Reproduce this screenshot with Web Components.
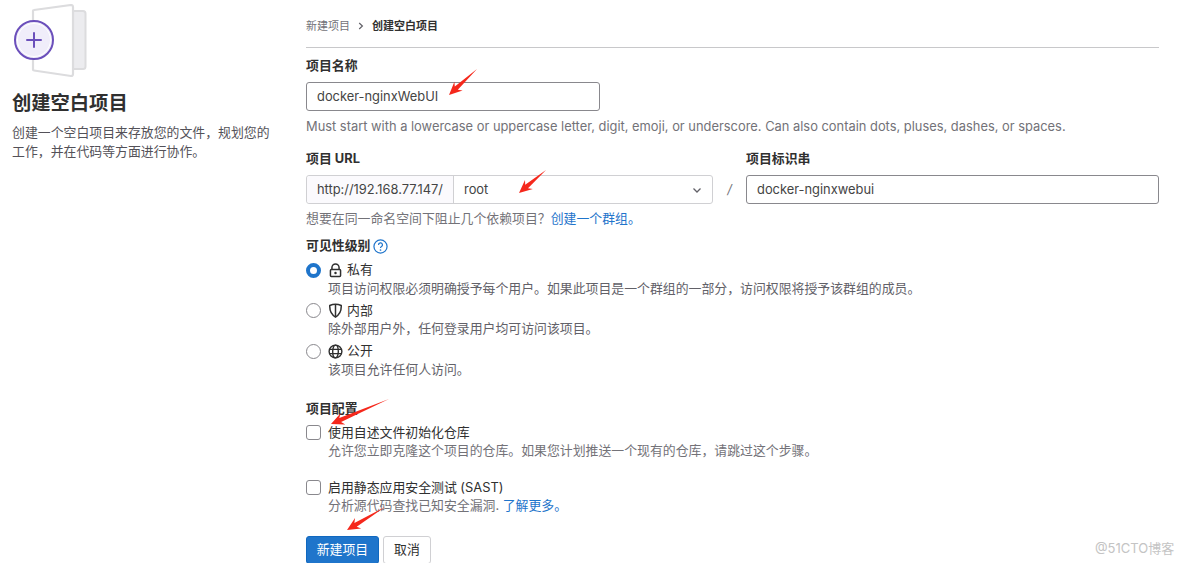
<!DOCTYPE html>
<html lang="zh">
<head>
<meta charset="utf-8">
<title>创建空白项目</title>
<style>
html, body { margin: 0; height: 563px; overflow: hidden; background: #fff; }
body { font: 12.88px/18px Inter, "Noto Sans CJK SC", sans-serif; color: #303030; }
</style>
</head>
<body>
<new-project-page>
  <side-intro slot="side" title-text="创建空白项目">创建一个空白项目来存放您的文件，规划您的工作，并在代码等方面进行协作。</side-intro>

  <crumb-nav first="新建项目" current="创建空白项目"></crumb-nav>

  <form-field label="项目名称" style="margin-top:9px;--label-gap:7px">
    <text-input value="docker-nginxWebUI" style="width:294px"></text-input>
    <help-text style="margin-top:7px">Must start with a lowercase or uppercase letter, digit, emoji, or underscore. Can also contain dots, pluses, dashes, or spaces.</help-text>
  </form-field>

  <url-row style="margin-top:14px"></url-row>

  <form-field label="可见性级别" help style="margin-top:9px;--label-gap:6px">
    <radio-option checked icon="lock" label="私有">项目访问权限必须明确授予每个用户。如果此项目是一个群组的一部分，访问权限将授予该群组的成员。</radio-option>
    <radio-option icon="shield" label="内部">除外部用户外，任何登录用户均可访问该项目。</radio-option>
    <radio-option icon="globe" label="公开">该项目允许任何人访问。</radio-option>
  </form-field>

  <form-field label="项目配置" style="margin-top:21.5px;--label-gap:5px">
    <check-option label="使用自述文件初始化仓库">允许您立即克隆这个项目的仓库。如果您计划推送一个现有的仓库，请跳过这个步骤。</check-option>
    <check-option label="启用静态应用安全测试 (SAST)" style="margin-top:18px">分析源代码查找已知安全漏洞. <a href="#" style="color:#1f75cb;text-decoration:none">了解更多。</a></check-option>
  </form-field>

  <form-actions></form-actions>

  <red-arrow slot="over" x1="477" y1="69" x2="449" y2="95"></red-arrow>
  <red-arrow slot="over" x1="546" y1="170" x2="519" y2="193"></red-arrow>
  <red-arrow slot="over" x1="389" y1="399" x2="331" y2="424"></red-arrow>
  <red-arrow slot="over" x1="385" y1="507" x2="347" y2="530"></red-arrow>
  <span slot="over" style="position:absolute;left:1095px;top:540px;font-size:13px;line-height:16px;color:#c4c4c4">@51CTO博客</span>
</new-project-page>

<script>
const ICONS = {
  lock: '<path d="M4.2 7V4.8a3.8 3.8 0 0 1 7.6 0V7" fill="none" stroke="currentColor" stroke-width="1.6"/><rect x="2.6" y="7" width="10.8" height="7.4" rx="1" fill="none" stroke="currentColor" stroke-width="1.6"/><circle cx="8" cy="10.7" r="1.3" fill="currentColor"/>',
  shield: '<path d="M1.9 2.7C5.5 1.2 10.5 1.2 14.1 2.7 14.4 8 12.2 12.6 8 15 3.8 12.6 1.6 8 1.9 2.7Z" fill="none" stroke="currentColor" stroke-width="1.6"/><path d="M8 2v12.5" stroke="currentColor" stroke-width="1.6"/>',
  globe: '<circle cx="8" cy="8" r="6.8" fill="none" stroke="currentColor" stroke-width="1.5"/><ellipse cx="8" cy="8" rx="3" ry="6.8" fill="none" stroke="currentColor" stroke-width="1.5"/><path d="M1.6 5.7h12.8M1.6 10.3h12.8" stroke="currentColor" stroke-width="1.5"/>'
};

class NewProjectPage extends HTMLElement {
  connectedCallback() {
    this.attachShadow({ mode: 'open' }).innerHTML = `
      <style>
        :host { display: flex; position: relative; height: 563px; overflow: hidden; box-sizing: border-box; padding: 0 25px 0 12px; }
        .side { flex: 0 0 294px; }
        .main { flex: 1; min-width: 0; padding-top: 17px; }
      </style>
      <div class="side"><slot name="side"></slot></div>
      <div class="main"><slot></slot></div>
      <slot name="over"></slot>`;
  }
}

class SideIntro extends HTMLElement {
  connectedCallback() {
    this.attachShadow({ mode: 'open' }).innerHTML = `
      <style>
        :host { display: block; width: 262px; padding-top: 4px; }
        svg { display: block; }
        h1 { margin: 12px 0 0; font-size: 19.3px; line-height: 26px; font-weight: 700; color: #303030; }
        p { margin: 8px 0 0; line-height: 18.5px; color: #535158; }
      </style>
      <svg width="76" height="74" viewBox="0 0 76 74">
        <path d="M60 7 L71 7 Q73.5 7 73.5 9.5 L73.5 62.5 Q73.5 65 71 65 L60 65Z" fill="#ececef" stroke="#dcdcde" stroke-width="2"/>
        <path d="M22 6 L59 1 Q61 1 61 3 L61 70 Q61 72 59 72 L22 66.5 Q21 66.5 21 65.5 L21 7 Q21 6 22 6Z" fill="#fff" stroke="#dcdcde" stroke-width="2.2"/>
        <circle cx="22" cy="36" r="19" fill="#f0edfa" stroke="#6b4fbb" stroke-width="2"/>
        <circle cx="22" cy="36" r="16.5" fill="none" stroke="#fff" stroke-width="1"/>
        <path d="M22 29v14M15 36h14" stroke="#6b4fbb" stroke-width="2" stroke-linecap="round"/>
      </svg>
      <h1>${this.getAttribute('title-text')}</h1>
      <p><slot></slot></p>`;
  }
}

class CrumbNav extends HTMLElement {
  connectedCallback() {
    this.attachShadow({ mode: 'open' }).innerHTML = `
      <style>
        :host { display: flex; align-items: flex-start; height: 30px; border-bottom: 1px solid #c8c8ca; font-size: 11px; line-height: 18px; color: #737278; }
        svg { margin: 5px 8px 0 8px; }
        b { color: #303030; font-weight: 700; }
      </style>
      <span>${this.getAttribute('first')}</span>
      <svg width="6" height="8" viewBox="0 0 6 8"><path d="M1.2 1 4.4 4 1.2 7" fill="none" stroke="#626168" stroke-width="1.2"/></svg>
      <b>${this.getAttribute('current')}</b>`;
  }
}

class FormField extends HTMLElement {
  connectedCallback() {
    const help = this.hasAttribute('help') ? `<svg width="15" height="15" viewBox="0 0 16 16"><circle cx="8" cy="8" r="7" fill="none" stroke="#1f75cb" stroke-width="1.3"/><path d="M5.9 6.3A2.1 2.1 0 1 1 8.8 8.2c-.6.3-.8.7-.8 1.4" fill="none" stroke="#1f75cb" stroke-width="1.3"/><circle cx="8" cy="11.7" r=".9" fill="#1f75cb"/></svg>` : '';
    this.attachShadow({ mode: 'open' }).innerHTML = `
      <style>
        :host { display: block; }
        label { display: flex; align-items: center; gap: 3px; height: 18px; font-weight: 700; color: #303030; margin-bottom: var(--label-gap, 8px); }
      </style>
      <label>${this.getAttribute('label')}${help}</label>
      <slot></slot>`;
  }
}

class TextInput extends HTMLElement {
  connectedCallback() {
    this.attachShadow({ mode: 'open' }).innerHTML = `
      <style>
        :host { display: block; box-sizing: border-box; height: 29px; border: 1px solid #89888d; border-radius: 3px; padding: 0 10px; line-height: 27px; color: #444; background: #fff; }
      </style>
      ${this.getAttribute('value')}`;
  }
}

class HelpText extends HTMLElement {
  connectedCallback() {
    this.attachShadow({ mode: 'open' }).innerHTML = `
      <style>:host { display: block; color: #737278; line-height: 18px; }</style><slot></slot>`;
  }
}

class UrlRow extends HTMLElement {
  connectedCallback() {
    this.attachShadow({ mode: 'open' }).innerHTML = `
      <style>
        :host { display: block; }
        .row { display: grid; grid-template-columns: 407px 33px 1fr; }
        .lab { height: 18px; font-weight: 700; margin-bottom: 7px; }
        .group { display: flex; box-sizing: border-box; height: 29px; border: 1px solid #d0d0d3; border-radius: 3px; line-height: 27px; color: #444; }
        .pre { flex: 0 0 auto; width: 147px; padding-left: 10px; box-sizing: border-box; background: #fbfafd; border-right: 1px solid #d0d0d3; border-radius: 3px 0 0 3px; white-space: nowrap; overflow: hidden; }
        .sel { flex: 1; display: flex; align-items: center; justify-content: space-between; padding: 0 10px; }
        .slash { height: 29px; line-height: 29px; text-align: center; color: #737278; font-style: italic; }
        help-text { margin-top: 6px; }
      </style>
      <div class="row">
        <div>
          <div class="lab">项目 URL</div>
          <div class="group">
            <span class="pre">http://192.168.77.147/</span>
            <span class="sel">root<svg width="10" height="10" viewBox="0 0 10 10"><path d="M1.5 3.5 5 7l3.5-3.5" fill="none" stroke="#626168" stroke-width="1.3"/></svg></span>
          </div>
        </div>
        <div><div class="lab"></div><div class="slash">/</div></div>
        <div>
          <div class="lab">项目标识串</div>
          <text-input value="docker-nginxwebui"></text-input>
        </div>
      </div>
      <help-text>想要在同一命名空间下阻止几个依赖项目？<a href="#" style="color:#1f75cb;text-decoration:none">创建一个群组。</a></help-text>`;
  }
}

class RadioOption extends HTMLElement {
  connectedCallback() {
    const on = this.hasAttribute('checked');
    this.attachShadow({ mode: 'open' }).innerHTML = `
      <style>
        :host { display: grid; grid-template-columns: 22px 1fr; margin-bottom: 4px; }
        .dot { box-sizing: border-box; width: 15px; height: 15px; margin-top: 1.5px; border-radius: 50%; border: 1px solid #89888d; }
        .dot.on { border: 4.5px solid #1f75cb; background: #fff; }
        .top { display: flex; align-items: center; gap: 4px; height: 18px; color: #303030; }
        .desc { color: #626168; line-height: 18px; margin-top: .5px; }
      </style>
      <div class="dot ${on ? 'on' : ''}"></div>
      <div>
        <div class="top"><svg width="15" height="15" viewBox="0 0 16 16" style="color:#303030">${ICONS[this.getAttribute('icon')]}</svg>${this.getAttribute('label')}</div>
        <div class="desc"><slot></slot></div>
      </div>`;
  }
}

class CheckOption extends HTMLElement {
  connectedCallback() {
    this.attachShadow({ mode: 'open' }).innerHTML = `
      <style>
        :host { display: grid; grid-template-columns: 22px 1fr; }
        .box { box-sizing: border-box; width: 15px; height: 15px; margin-top: 1.5px; border-radius: 3px; border: 1px solid #89888d; background: #fff; }
        .top { height: 18px; padding-top: 1px; color: #303030; }
        .desc { color: #737278; line-height: 18px; }
      </style>
      <div class="box"></div>
      <div>
        <div class="top">${this.getAttribute('label')}</div>
        <div class="desc"><slot></slot></div>
      </div>`;
  }
}

class FormActions extends HTMLElement {
  connectedCallback() {
    this.attachShadow({ mode: 'open' }).innerHTML = `
      <style>
        :host { display: flex; gap: 4px; margin-top: 21px; }
        button { font: inherit; height: 28px; padding: 0; border-radius: 3px; }
        .go { width: 73px; background: #1f75cb; color: #fff; border: 1px solid #1068bf; }
        .no { width: 48px; background: #fff; color: #303030; border: 1px solid #d0d0d3; }
      </style>
      <button class="go">新建项目</button><button class="no">取消</button>`;
  }
}

// Red hand-drawn annotation arrows sit over the form
class RedArrow extends HTMLElement {
  connectedCallback() {
    const [x1, y1, x2, y2] = ['x1', 'y1', 'x2', 'y2'].map(k => +this.getAttribute(k));
    const left = Math.min(x1, x2) - 8, top = Math.min(y1, y2) - 8;
    const w = Math.abs(x1 - x2) + 16, h = Math.abs(y1 - y2) + 16;
    const len = Math.hypot(x2 - x1, y2 - y1);
    const ux = (x2 - x1) / len, uy = (y2 - y1) / len, nx = -uy, ny = ux;
    const pt = (d, s) => `${(x2 - ux * d + nx * s - left).toFixed(1)},${(y2 - uy * d + ny * s - top).toFixed(1)}`;
    this.attachShadow({ mode: 'open' }).innerHTML = `
      <style>:host { position: absolute; left: ${left}px; top: ${top}px; line-height: 0; }</style>
      <svg width="${w}" height="${h}"><polygon fill="#f5281c" points="${x1 - left},${y1 - top} ${pt(10, 2.2)} ${pt(13, 6)} ${x2 - left},${y2 - top} ${pt(13, -6)} ${pt(10, -2.2)}"/></svg>`;
  }
}

customElements.define('new-project-page', NewProjectPage);
customElements.define('side-intro', SideIntro);
customElements.define('crumb-nav', CrumbNav);
customElements.define('form-field', FormField);
customElements.define('text-input', TextInput);
customElements.define('help-text', HelpText);
customElements.define('url-row', UrlRow);
customElements.define('radio-option', RadioOption);
customElements.define('check-option', CheckOption);
customElements.define('form-actions', FormActions);
customElements.define('red-arrow', RedArrow);
</script>
</body>
</html>
